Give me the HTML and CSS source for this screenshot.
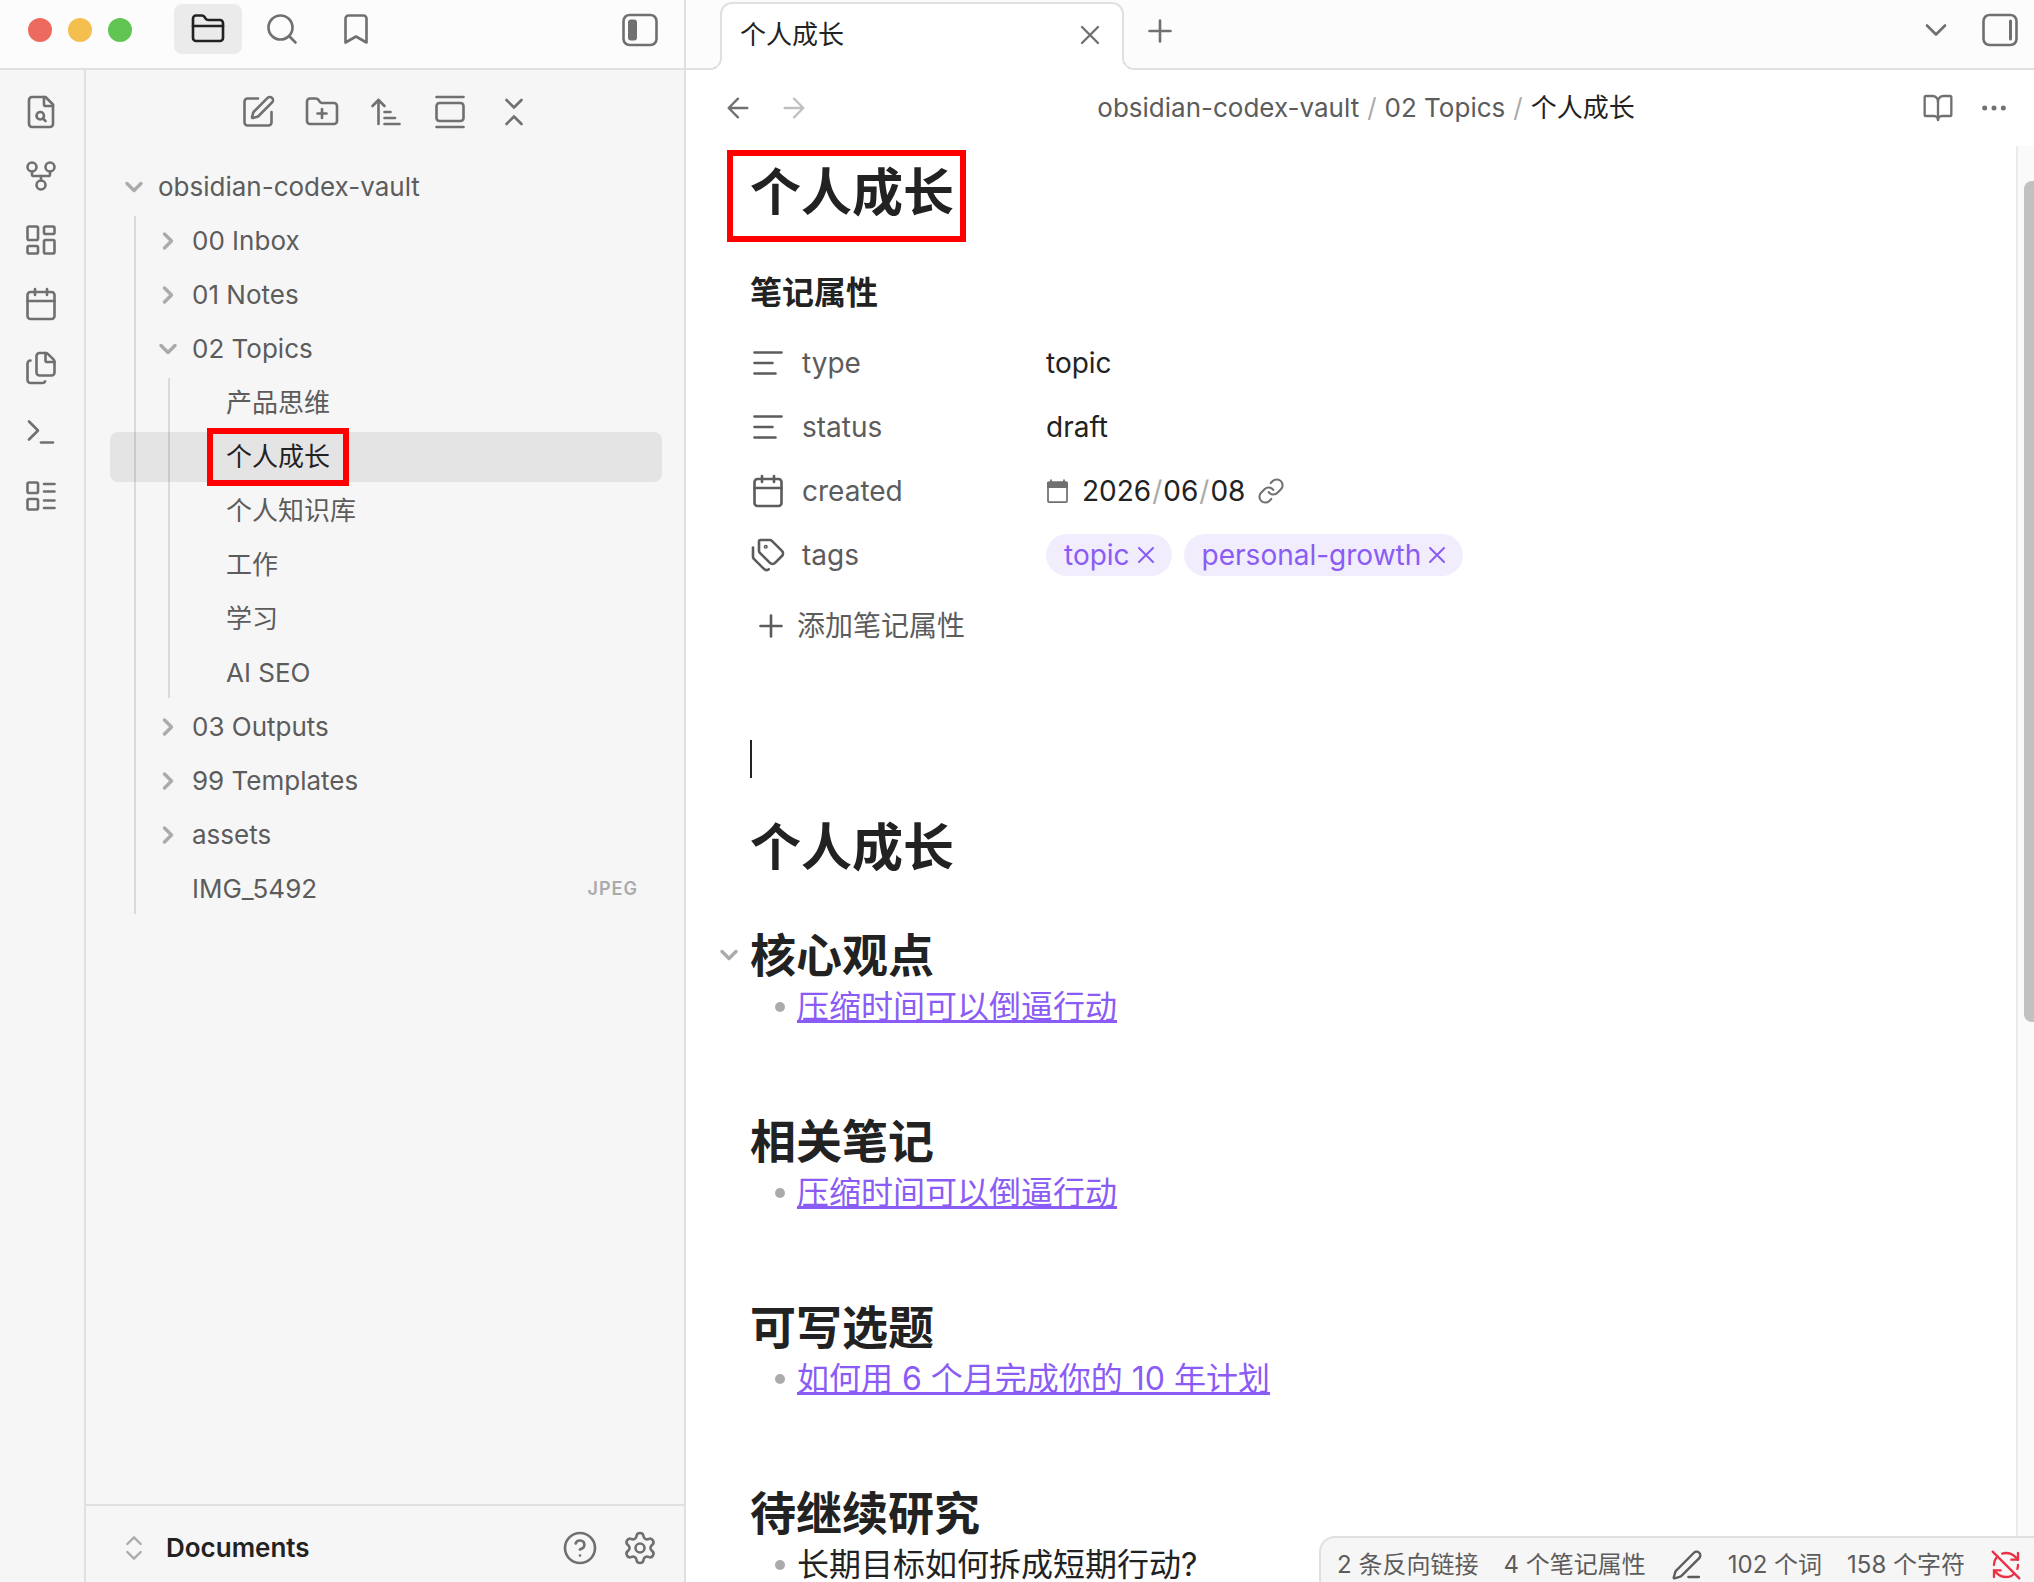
FILE: index.html
```html
<!DOCTYPE html>
<html lang="zh-CN">

<head>
	<meta charset="utf-8">
	<title>个人成长 - obsidian-codex-vault</title>
	<link rel="stylesheet" href="styles.css">
</head>

<body>

	<!-- icon set, 24 unit grid -->
	<svg class="sprite" aria-hidden="true">
		<symbol id="i-folder" viewBox="0 0 24 24"><path d="M20 20a2 2 0 0 0 2-2V8a2 2 0 0 0-2-2h-7.9a2 2 0 0 1-1.69-.9L9.6 3.9A2 2 0 0 0 7.93 3H4a2 2 0 0 0-2 2v13a2 2 0 0 0 2 2Z"/><path d="M2 10h20"/></symbol>
		<symbol id="i-search" viewBox="0 0 24 24"><circle cx="11" cy="11" r="8"/><path d="m21 21-4.3-4.3"/></symbol>
		<symbol id="i-bookmark" viewBox="0 0 24 24"><path d="m19 21-7-4-7 4V5a2 2 0 0 1 2-2h10a2 2 0 0 1 2 2v16z"/></symbol>
		<symbol id="i-panel-left" viewBox="0 0 24 24"><rect x="1" y="2" width="22" height="20" rx="4"/><rect class="solid" x="4" y="5" width="6" height="14" rx="2"/></symbol>
		<symbol id="i-panel-right" viewBox="0 0 24 24"><rect x="1" y="2" width="22" height="20" rx="4"/><rect class="solid" x="18" y="5" width="2" height="14" rx="1"/></symbol>
		<symbol id="i-file-search" viewBox="0 0 24 24"><path d="M15 2H6a2 2 0 0 0-2 2v16a2 2 0 0 0 2 2h12a2 2 0 0 0 2-2V7Z"/><path d="M14 2v5a1 1 0 0 0 1 1h5"/><circle cx="11.5" cy="14.5" r="2.5"/><path d="M13.3 16.3 15 18"/></symbol>
		<symbol id="i-fork" viewBox="0 0 24 24"><circle cx="12" cy="18" r="3"/><circle cx="6" cy="6" r="3"/><circle cx="18" cy="6" r="3"/><path d="M18 9v2c0 .6-.4 1-1 1H7c-.6 0-1-.4-1-1V9"/><path d="M12 12v3"/></symbol>
		<symbol id="i-dashboard" viewBox="0 0 24 24"><rect x="3" y="3" width="7" height="9" rx="1"/><rect x="14" y="3" width="7" height="5" rx="1"/><rect x="14" y="12" width="7" height="9" rx="1"/><rect x="3" y="16" width="7" height="5" rx="1"/></symbol>
		<symbol id="i-calendar" viewBox="0 0 24 24"><rect x="3" y="4" width="18" height="18" rx="2"/><path d="M16 2v4M8 2v4M3 10h18"/></symbol>
		<symbol id="i-files" viewBox="0 0 24 24"><path d="M15 2h-4a2 2 0 0 0-2 2v11a2 2 0 0 0 2 2h8a2 2 0 0 0 2-2V8"/><path d="M16.706 2.706A2.4 2.4 0 0 0 15 2v5a1 1 0 0 0 1 1h5a2.4 2.4 0 0 0-.706-1.706z"/><path d="M5 7a2 2 0 0 0-2 2v11a2 2 0 0 0 2 2h8a2 2 0 0 0 1.732-1"/></symbol>
		<symbol id="i-terminal" viewBox="0 0 24 24"><path d="m4 17 6-6-6-6"/><path d="M12 19h8"/></symbol>
		<symbol id="i-list" viewBox="0 0 24 24"><rect x="3" y="3" width="7" height="7" rx="1"/><rect x="3" y="14" width="7" height="7" rx="1"/><path d="M14 4h7M14 9h7M14 15h7M14 20h7"/></symbol>
		<symbol id="i-edit" viewBox="0 0 24 24"><path d="M12 3H5a2 2 0 0 0-2 2v14a2 2 0 0 0 2 2h14a2 2 0 0 0 2-2v-7"/><path d="M18.375 2.625a1 1 0 0 1 3 3l-9.013 9.014a2 2 0 0 1-.853.505l-2.873.84a.5.5 0 0 1-.62-.62l.84-2.873a2 2 0 0 1 .506-.852z"/></symbol>
		<symbol id="i-folder-plus" viewBox="0 0 24 24"><path d="M20 20a2 2 0 0 0 2-2V8a2 2 0 0 0-2-2h-7.9a2 2 0 0 1-1.69-.9L9.6 3.9A2 2 0 0 0 7.93 3H4a2 2 0 0 0-2 2v13a2 2 0 0 0 2 2Z"/><path d="M12 10v6M9 13h6"/></symbol>
		<symbol id="i-sort" viewBox="0 0 24 24"><path d="m3 8 4-4 4 4"/><path d="M7 4v16M11 12h4M11 16h7M11 20h10"/></symbol>
		<symbol id="i-gallery" viewBox="0 0 24 24"><path d="M3 2h18M3 22h18"/><rect x="3" y="6" width="18" height="12" rx="2"/></symbol>
		<symbol id="i-collapse" viewBox="0 0 24 24"><path d="m7 20 5-5 5 5M7 4l5 5 5-5"/></symbol>
		<symbol id="i-up-down" viewBox="0 0 24 24"><path d="m7 15 5 5 5-5M7 9l5-5 5 5"/></symbol>
		<symbol id="i-help" viewBox="0 0 24 24"><circle cx="12" cy="12" r="10"/><path d="M9.09 9a3 3 0 0 1 5.83 1c0 2-3 3-3 3"/><path d="M12 17h.01"/></symbol>
		<symbol id="i-gear" viewBox="0 0 24 24"><path d="M9.671 4.136a2.34 2.34 0 0 1 4.659 0 2.34 2.34 0 0 0 3.319 1.915 2.34 2.34 0 0 1 2.33 4.033 2.34 2.34 0 0 0 0 3.831 2.34 2.34 0 0 1-2.33 4.033 2.34 2.34 0 0 0-3.319 1.915 2.34 2.34 0 0 1-4.659 0 2.34 2.34 0 0 0-3.32-1.915 2.34 2.34 0 0 1-2.33-4.033 2.34 2.34 0 0 0 0-3.831A2.34 2.34 0 0 1 6.35 6.051a2.34 2.34 0 0 0 3.319-1.915"/><circle cx="12" cy="12" r="3"/></symbol>
		<symbol id="i-close" viewBox="0 0 24 24"><path d="M18 6 6 18M6 6l12 12"/></symbol>
		<symbol id="i-plus" viewBox="0 0 24 24"><path d="M5 12h14M12 5v14"/></symbol>
		<symbol id="i-down" viewBox="0 0 24 24"><path d="m6 9 6 6 6-6"/></symbol>
		<symbol id="i-right" viewBox="0 0 24 24"><path d="m9 18 6-6-6-6"/></symbol>
		<symbol id="i-back" viewBox="0 0 24 24"><path d="m12 19-7-7 7-7M19 12H5"/></symbol>
		<symbol id="i-forward" viewBox="0 0 24 24"><path d="M5 12h14M12 5l7 7-7 7"/></symbol>
		<symbol id="i-book" viewBox="0 0 24 24"><path d="M12 7v14"/><path d="M3 18a1 1 0 0 1-1-1V4a1 1 0 0 1 1-1h5a4 4 0 0 1 4 4 4 4 0 0 1 4-4h5a1 1 0 0 1 1 1v13a1 1 0 0 1-1 1h-6a3 3 0 0 0-3 3 3 3 0 0 0-3-3z"/></symbol>
		<symbol id="i-more" viewBox="0 0 24 24"><circle cx="12" cy="12" r="1"/><circle cx="19" cy="12" r="1"/><circle cx="5" cy="12" r="1"/></symbol>
		<symbol id="i-text" viewBox="0 0 24 24"><path d="M21 5H3M15 12H3M17 19H3"/></symbol>
		<symbol id="i-tags" viewBox="0 0 24 24"><path d="M13.172 2a2 2 0 0 1 1.414.586l6.71 6.71a2.4 2.4 0 0 1 0 3.408l-4.592 4.592a2.4 2.4 0 0 1-3.408 0l-6.71-6.71A2 2 0 0 1 6 9.172V3a1 1 0 0 1 1-1z"/><path d="M2 7v6.172a2 2 0 0 0 .586 1.414l6.71 6.71a2.4 2.4 0 0 0 3.191.193"/><circle cx="10.5" cy="6.5" r=".5"/></symbol>
		<symbol id="i-date" viewBox="0 0 24 24"><rect x="2" y="3" width="19" height="20" rx="1"/><path class="solid" d="M1 3h21v6H1z"/><path d="M5 1v3M18 1v3"/></symbol>
		<symbol id="i-link" viewBox="0 0 24 24"><path d="M10 13a5 5 0 0 0 7.54.54l3-3a5 5 0 0 0-7.07-7.07l-1.72 1.71"/><path d="M14 11a5 5 0 0 0-7.54-.54l-3 3a5 5 0 0 0 7.07 7.07l1.71-1.71"/></symbol>
		<symbol id="i-pen" viewBox="0 0 24 24"><path d="M13 21h8"/><path d="M21.174 6.812a1 1 0 0 0-3.986-3.987L3.842 16.174a2 2 0 0 0-.5.83l-1.321 4.352a.5.5 0 0 0 .623.622l4.353-1.32a2 2 0 0 0 .83-.497z"/></symbol>
		<symbol id="i-sync-off" viewBox="0 0 24 24"><path d="M21 8l-2.26-2.26A9.75 9.75 0 0 0 12 3c-1 0-1.97.16-2.87.47"/><path d="M8 16H3v5"/><path d="M3 12c0-2.49 1-4.74 2.64-6.36"/><path d="m3 16 2.26 2.26A9.75 9.75 0 0 0 12 21c2.49 0 4.74-1 6.36-2.64"/><path d="M21 12c0 1-.16 1.97-.47 2.87"/><path d="M21 3v5h-5"/><path d="M22 22 2 2"/></symbol>
	</svg>

	<div class="left">
		<header class="left-head">
			<div class="lights">
				<span class="light red"></span>
				<span class="light yellow"></span>
				<span class="light green"></span>
			</div>
			<nav class="left-tabs">
				<button class="left-tab active" aria-label="文件列表"><svg class="icon"><use href="#i-folder"/></svg></button>
				<button class="left-tab" aria-label="搜索"><svg class="icon"><use href="#i-search"/></svg></button>
				<button class="left-tab" aria-label="书签"><svg class="icon"><use href="#i-bookmark"/></svg></button>
			</nav>
			<button class="btn toggle" aria-label="折叠"><svg class="icon"><use href="#i-panel-left"/></svg></button>
		</header>

		<div class="left-body">
			<nav class="ribbon">
				<button class="btn" aria-label="快速切换"><svg class="icon"><use href="#i-file-search"/></svg></button>
				<button class="btn" aria-label="关系图谱"><svg class="icon"><use href="#i-fork"/></svg></button>
				<button class="btn" aria-label="白板"><svg class="icon"><use href="#i-dashboard"/></svg></button>
				<button class="btn" aria-label="日记"><svg class="icon"><use href="#i-calendar"/></svg></button>
				<button class="btn" aria-label="模板"><svg class="icon"><use href="#i-files"/></svg></button>
				<button class="btn" aria-label="命令面板"><svg class="icon"><use href="#i-terminal"/></svg></button>
				<button class="btn" aria-label="数据库"><svg class="icon"><use href="#i-list"/></svg></button>
			</nav>

			<section class="explorer">
				<div class="tools">
					<button class="btn" aria-label="新建笔记"><svg class="icon"><use href="#i-edit"/></svg></button>
					<button class="btn" aria-label="新建文件夹"><svg class="icon"><use href="#i-folder-plus"/></svg></button>
					<button class="btn" aria-label="排序"><svg class="icon"><use href="#i-sort"/></svg></button>
					<button class="btn" aria-label="自动定位"><svg class="icon"><use href="#i-gallery"/></svg></button>
					<button class="btn" aria-label="全部折叠"><svg class="icon"><use href="#i-collapse"/></svg></button>
				</div>

				<div class="tree">
					<div class="row"><svg class="icon fold"><use href="#i-down"/></svg>obsidian-codex-vault</div>
					<div class="branch">
						<div class="row"><svg class="icon fold"><use href="#i-right"/></svg>00 Inbox</div>
						<div class="row"><svg class="icon fold"><use href="#i-right"/></svg>01 Notes</div>
						<div class="row"><svg class="icon fold"><use href="#i-down"/></svg>02 Topics</div>
						<div class="branch">
							<div class="row file">产品思维</div>
							<div class="row file current"><span class="marked">个人成长</span></div>
							<div class="row file">个人知识库</div>
							<div class="row file">工作</div>
							<div class="row file">学习</div>
							<div class="row file">AI SEO</div>
						</div>
						<div class="row"><svg class="icon fold"><use href="#i-right"/></svg>03 Outputs</div>
						<div class="row"><svg class="icon fold"><use href="#i-right"/></svg>99 Templates</div>
						<div class="row"><svg class="icon fold"><use href="#i-right"/></svg>assets</div>
						<div class="row file">IMG_5492<span class="ext">JPEG</span></div>
					</div>
				</div>

				<footer class="vault">
					<button class="vault-name"><svg class="icon mid"><use href="#i-up-down"/></svg>Documents</button>
					<button class="btn" aria-label="帮助"><svg class="icon"><use href="#i-help"/></svg></button>
					<button class="btn" aria-label="设置"><svg class="icon"><use href="#i-gear"/></svg></button>
				</footer>
			</section>
		</div>
	</div>

	<div class="main">
		<header class="tabs">
			<div class="tab">
				<span class="tab-title">个人成长</span>
				<button class="btn" aria-label="关闭"><svg class="icon mid"><use href="#i-close"/></svg></button>
			</div>
			<button class="btn new-tab" aria-label="新标签页"><svg class="icon"><use href="#i-plus"/></svg></button>
			<div class="tabs-end">
				<button class="btn" aria-label="标签页列表"><svg class="icon"><use href="#i-down"/></svg></button>
				<button class="btn" aria-label="展开"><svg class="icon"><use href="#i-panel-right"/></svg></button>
			</div>
		</header>

		<div class="view-head">
			<div class="history">
				<button class="btn" aria-label="后退"><svg class="icon mid"><use href="#i-back"/></svg></button>
				<button class="btn" aria-label="前进" disabled><svg class="icon mid"><use href="#i-forward"/></svg></button>
			</div>
			<nav class="crumbs">
				<a href="#">obsidian-codex-vault</a><span class="sep">/</span><a href="#">02 Topics</a><span class="sep">/</span><span class="here">个人成长</span>
			</nav>
			<div class="actions">
				<button class="btn" aria-label="阅读视图"><svg class="icon mid"><use href="#i-book"/></svg></button>
				<button class="btn" aria-label="更多选项"><svg class="icon mid"><use href="#i-more"/></svg></button>
			</div>
		</div>

		<div class="view">
			<article class="note">
				<h1 class="title"><span class="marked">个人成长</span></h1>

				<section class="props">
					<h2 class="props-title">笔记属性</h2>
					<div class="prop">
						<label class="key" for="type"><svg class="icon"><use href="#i-text"/></svg>type</label>
						<input class="value" id="type" type="text" value="topic">
					</div>
					<div class="prop">
						<label class="key" for="status"><svg class="icon"><use href="#i-text"/></svg>status</label>
						<input class="value" id="status" type="text" value="draft">
					</div>
					<div class="prop">
						<span class="key"><svg class="icon"><use href="#i-calendar"/></svg>created</span>
						<div class="value date">
							<svg class="icon tiny"><use href="#i-date"/></svg>
							<time datetime="2026-06-08">2026<i>/</i>06<i>/</i>08</time>
							<a class="daily" href="#" aria-label="日记"><svg class="icon small"><use href="#i-link"/></svg></a>
						</div>
					</div>
					<div class="prop">
						<span class="key"><svg class="icon"><use href="#i-tags"/></svg>tags</span>
						<div class="value pills">
							<span class="pill">topic<button class="btn" aria-label="移除"><svg class="icon small"><use href="#i-close"/></svg></button></span>
							<span class="pill">personal-growth<button class="btn" aria-label="移除"><svg class="icon small"><use href="#i-close"/></svg></button></span>
						</div>
					</div>
					<button class="add"><svg class="icon"><use href="#i-plus"/></svg>添加笔记属性</button>
				</section>

				<p class="line"><span class="caret"></span></p>
				<h1>个人成长</h1>

				<h2 class="first"><svg class="icon fold"><use href="#i-down"/></svg>核心观点</h2>
				<ul>
					<li><a href="#">压缩时间可以倒逼行动</a></li>
				</ul>

				<h2>相关笔记</h2>
				<ul>
					<li><a href="#">压缩时间可以倒逼行动</a></li>
				</ul>

				<h2>可写选题</h2>
				<ul>
					<li><a href="#">如何用 6 个月完成你的 10 年计划</a></li>
				</ul>

				<h2>待继续研究</h2>
				<ul>
					<li>长期目标如何拆成短期行动?</li>
				</ul>
			</article>
			<div class="scroll"><div class="thumb"></div></div>
		</div>

		<footer class="status">
			<span>2 条反向链接</span>
			<span>4 个笔记属性</span>
			<svg class="icon mid"><use href="#i-pen"/></svg>
			<span>102 个词</span>
			<span>158 个字符</span>
			<svg class="icon mid sync"><use href="#i-sync-off"/></svg>
		</footer>
	</div>

</body>

</html>
```
FILE: styles.css
```css
* {
	box-sizing: border-box;
}
body {
	margin: 0;
	height: 100vh;
	display: flex;
	overflow: hidden;
	font-family: Inter, "Noto Sans CJK SC", sans-serif;
	font-size: 26px;
	line-height: 34px;
	color: #222222;
	background-color: #ffffff;
}
button, input {
	margin: 0;
	padding: 0;
	border: 0;
	background: none;
	font: inherit;
	color: inherit;
}
a {
	color: inherit;
	text-decoration: none;
}
h1, h2, p, ul {
	margin: 0;
	padding: 0;
}

/* icons */
.sprite {
	display: none;
}
.icon {
	width: 36px;
	height: 36px;
	flex: none;
	display: block;
	fill: none;
	stroke: currentColor;
	stroke-width: 1.75;
	stroke-linecap: round;
	stroke-linejoin: round;
}
.icon.mid {
	width: 32px;
	height: 32px;
}
.icon.small {
	width: 28px;
	height: 28px;
}
.icon.tiny {
	width: 24px;
	height: 24px;
}
.icon.fold {
	width: 28px;
	height: 28px;
	color: #ababab;
	stroke-width: 3;
}
.solid {
	fill: currentColor;
	stroke: none;
}
.btn {
	display: flex;
	color: #707070;
}
.btn:disabled {
	color: #c0c0c0;
}

/* left side */
.left {
	width: 686px;
	flex: none;
	display: flex;
	flex-direction: column;
	border-right: 2px solid #e0e0e0;
	background-color: #f6f6f6;
}
.left-head {
	height: 70px;
	flex: none;
	display: flex;
	align-items: flex-start;
	padding: 4px 26px 0 28px;
	border-bottom: 2px solid #e0e0e0;
	background-color: #fcfcfc;
}
.lights {
	display: flex;
	gap: 16px;
	padding: 14px 0;
}
.light {
	width: 24px;
	height: 24px;
	border-radius: 50%;
}
.light.red {
	background-color: #ec6a5e;
}
.light.yellow {
	background-color: #f4bf4f;
}
.light.green {
	background-color: #61c554;
}
.left-tabs {
	display: flex;
	gap: 6px;
	margin-left: 42px;
}
.left-tab {
	width: 68px;
	height: 50px;
	display: flex;
	align-items: center;
	justify-content: center;
	border-radius: 8px;
	color: #707070;
}
.left-tab.active {
	color: #222222;
	background-color: #ebebeb;
}
.toggle {
	margin-left: auto;
	padding: 8px 0;
}
.left-body {
	flex: 1;
	display: flex;
	min-height: 0;
}
.ribbon {
	width: 86px;
	display: flex;
	flex-direction: column;
	align-items: center;
	gap: 28px;
	padding: 24px 4px 0 2px;
	border-right: 2px solid #e0e0e0;
}
.explorer {
	flex: 1;
	display: flex;
	flex-direction: column;
}
.tools {
	display: flex;
	justify-content: center;
	gap: 28px;
	padding: 24px 0 0 2px;
}
.tree {
	flex: 1;
	padding: 32px 22px 0 24px;
	color: #5c5c5c;
}
.row {
	position: relative;
	height: 50px;
	display: flex;
	align-items: center;
	gap: 10px;
	margin-bottom: 4px;
	padding-left: 10px;
}
.row.file {
	padding-left: 48px;
}
.branch {
	margin-left: 24px;
	padding-left: 8px;
	border-left: 2px solid #dadada;
}
.row.current {
	z-index: 0;
	color: #222222;
}
/* the highlight runs under the indent guides to the full tree width */
.row.current::before {
	content: "";
	position: absolute;
	z-index: -1;
	top: 0;
	right: 0;
	bottom: 0;
	left: -68px;
	border-radius: 8px;
	background-color: rgba(0, 0, 0, .07);
}
.ext {
	margin-left: auto;
	padding-right: 24px;
	font-size: 18px;
	font-weight: 600;
	letter-spacing: 1px;
	color: #ababab;
}
.vault {
	height: 78px;
	display: flex;
	align-items: center;
	gap: 24px;
	padding: 8px 26px 0 32px;
	border-top: 2px solid #e0e0e0;
}
.vault-name {
	flex: 1;
	display: flex;
	align-items: center;
	gap: 16px;
	font-weight: 600;
}
.vault-name .icon {
	color: #ababab;
}

/* red frames */
.marked {
	position: relative;
}
.marked::after {
	content: "";
	position: absolute;
	inset: -12px -19px;
	border: 6px solid #ff0000;
}
.title .marked::after {
	inset: -12px -12px -19px -23px;
}

/* main side */
.main {
	position: relative;
	flex: 1;
	display: flex;
	flex-direction: column;
	min-width: 0;
}
.tabs {
	height: 70px;
	flex: none;
	display: flex;
	align-items: flex-start;
	padding: 2px 16px 0 34px;
	border-bottom: 2px solid #e0e0e0;
	background-color: #fcfcfc;
}
.tab {
	position: relative;
	width: 404px;
	height: 68px;
	display: flex;
	align-items: center;
	justify-content: space-between;
	padding: 0 16px 4px 18px;
	border: 2px solid #e0e0e0;
	border-bottom: 0;
	border-radius: 12px 12px 0 0;
	background-color: #ffffff;
}
.tab::before, .tab::after {
	content: "";
	position: absolute;
	bottom: 0;
	width: 12px;
	height: 12px;
}
.tab::before {
	right: 100%;
	background: radial-gradient(circle at 0 0, #fcfcfc 10px, #e0e0e0 10px, #e0e0e0 12px, #ffffff 12px);
}
.tab::after {
	left: 100%;
	background: radial-gradient(circle at 100% 0, #fcfcfc 10px, #e0e0e0 10px, #e0e0e0 12px, #ffffff 12px);
}
.new-tab {
	margin: 11px 0 0 18px;
}
.tabs-end {
	display: flex;
	align-items: center;
	gap: 28px;
	margin-left: auto;
	padding-top: 10px;
}
.view-head {
	height: 76px;
	flex: none;
	display: flex;
	align-items: center;
	padding: 0 24px 0 36px;
}
.history, .actions {
	display: flex;
	gap: 24px;
}
.crumbs {
	flex: 1;
	display: flex;
	justify-content: center;
	gap: 8px;
	color: #5c5c5c;
}
.sep {
	color: #ababab;
}
.here {
	color: #222222;
}
.view {
	flex: 1;
	display: flex;
	min-height: 0;
}
.note {
	flex: 1;
	overflow: hidden;
	padding: 16px 64px 0;
	font-size: 32px;
	line-height: 48px;
}
.note h1 {
	margin-top: 34px;
	font-size: 51px;
	line-height: 62px;
}
.note h2 {
	position: relative;
	margin-top: 82px;
	font-size: 46px;
	line-height: 56px;
}
.note h2.first {
	margin-top: 48px;
}
.note .title {
	margin-top: 0;
}
.note h2 .fold {
	position: absolute;
	top: 14px;
	right: 100%;
	margin-right: 7px;
}
.note .props-title {
	margin: 49px 0 18px;
	font-size: 32px;
	line-height: 40px;
}
.props {
	font-size: 28px;
}
.prop {
	height: 64px;
	display: flex;
	align-items: center;
}
.key {
	width: 296px;
	flex: none;
	display: flex;
	align-items: center;
	gap: 16px;
	color: #5c5c5c;
}
.value {
	flex: 1;
}
.date {
	display: flex;
	align-items: center;
	gap: 12px;
	color: #707070;
}
.date time {
	color: #222222;
}
.date i {
	padding: 0 1px;
	font-style: normal;
	color: #ababab;
}
.pills {
	display: flex;
	gap: 12px;
}
.pill {
	height: 42px;
	display: flex;
	align-items: center;
	gap: 2px;
	padding: 0 12px 0 18px;
	border-radius: 21px;
	color: #8a5cf5;
	background-color: #f1edfd;
}
.pill .btn {
	color: inherit;
}
.add {
	height: 46px;
	display: flex;
	align-items: center;
	gap: 8px;
	margin: 16px 0 0 3px;
	color: #5c5c5c;
}
.line {
	height: 48px;
	margin-top: 86px;
	padding: 5px 0;
}
.caret {
	display: block;
	width: 2px;
	height: 38px;
	background-color: #222222;
}
.note ul {
	list-style: none;
}
.note li {
	display: flex;
	align-items: center;
	padding-left: 25px;
}
.note li::before {
	content: "";
	width: 10px;
	height: 10px;
	margin-right: 12px;
	border-radius: 50%;
	background-color: #ababab;
}
.note li a {
	color: #8a5cf5;
	text-decoration: underline;
}
.scroll {
	width: 18px;
	padding: 35px 0 0 6px;
	border-left: 2px solid #ebebeb;
	background-color: #fafafa;
}
.thumb {
	height: 60%;
	border-radius: 8px 0 0 8px;
	background-color: #c1c1c1;
}
.status {
	position: absolute;
	right: 0;
	bottom: 0;
	height: 46px;
	display: flex;
	align-items: center;
	gap: 25px;
	padding: 10px 12px 0 16px;
	border: 2px solid #e0e0e0;
	border-width: 2px 0 0 2px;
	border-radius: 16px 0 0 0;
	font-size: 24px;
	color: #5c5c5c;
	background-color: #f6f6f6;
}
.sync {
	color: #e93147;
}
```
